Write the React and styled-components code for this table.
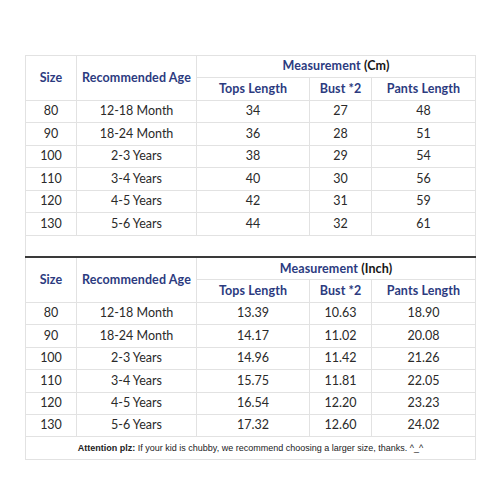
import React from 'react';
import styled, { createGlobalStyle } from 'styled-components';

const GlobalStyle = createGlobalStyle`
  html, body {
    margin: 0;
    padding: 0;
    background: #fff;
  }
`;

const Page = styled.div`
  width: 500px;
  height: 500px;
  padding: 55px 0 0 25px;
  box-sizing: border-box;
  background: #fff;
`;

const Table = styled.table`
  border-collapse: collapse;
  table-layout: fixed;
  width: 450px;
  font-family: Lato, "Open Sans", sans-serif;
  color: #2a2a2a;
  border: 1px solid #e2e2e2;
`;

const Row = styled.tr`
  height: 22.45px;
`;

const Cell = styled.td`
  border: 1px solid #e2e2e2;
  text-align: center;
  vertical-align: middle;
  padding: 0;
  font-size: 12.5px;
  line-height: 1;
  ${(p) => p.$sep && 'border-top: 2px solid #3a3a3a;'}
`;

const Head = styled(Cell).attrs({ as: 'th' })`
  color: #2c3b7f;
  font-weight: 700;
  font-size: 12.5px;
  letter-spacing: 0.1px;
`;

const Unit = styled.span`
  color: #151515;
`;

const Spacer = styled.td`
  border-left: 1px solid #e2e2e2;
  border-right: 1px solid #e2e2e2;
  border-top: 1px solid #e2e2e2;
  padding: 0;
`;

const Note = styled.td`
  border: 1px solid #e2e2e2;
  text-align: center;
  font-family: "Liberation Sans", Arial, sans-serif;
  font-size: 9px;
  color: #222;
  padding: 0;
  b {
    font-weight: 700;
  }
`;

const cm = [
  ['80', '12-18 Month', '34', '27', '48'],
  ['90', '18-24 Month', '36', '28', '51'],
  ['100', '2-3 Years', '38', '29', '54'],
  ['110', '3-4 Years', '40', '30', '56'],
  ['120', '4-5 Years', '42', '31', '59'],
  ['130', '5-6 Years', '44', '32', '61'],
];

const inch = [
  ['80', '12-18 Month', '13.39', '10.63', '18.90'],
  ['90', '18-24 Month', '14.17', '11.02', '20.08'],
  ['100', '2-3 Years', '14.96', '11.42', '21.26'],
  ['110', '3-4 Years', '15.75', '11.81', '22.05'],
  ['120', '4-5 Years', '16.54', '12.20', '23.23'],
  ['130', '5-6 Years', '17.32', '12.60', '24.02'],
];

const Header = ({ unit, sep }) => (
  <>
    <Row>
      <Head rowSpan={2} $sep={sep}>Size</Head>
      <Head rowSpan={2} $sep={sep}>Recommended Age</Head>
      <Head colSpan={3} $sep={sep}>
        Measurement <Unit>({unit})</Unit>
      </Head>
    </Row>
    <Row>
      <Head>Tops Length</Head>
      <Head>Bust *2</Head>
      <Head>Pants Length</Head>
    </Row>
  </>
);

const Body = ({ rows }) =>
  rows.map((r) => (
    <Row key={r[0]}>
      {r.map((v, i) => (
        <Cell key={i}>{v}</Cell>
      ))}
    </Row>
  ));

export default function App() {
  return (
    <Page>
      <GlobalStyle />
      <Table>
        <colgroup>
          <col style={{ width: 51 }} />
          <col style={{ width: 120 }} />
          <col style={{ width: 113 }} />
          <col style={{ width: 62 }} />
          <col style={{ width: 104 }} />
        </colgroup>
        <tbody>
          <Header unit="Cm" />
          <Body rows={cm} />
          <Row>
            <Spacer colSpan={5} />
          </Row>
          <Header unit="Inch" sep />
          <Body rows={inch} />
          <Row>
            <Note colSpan={5}>
              <b>Attention plz:</b> If your kid is chubby, we recommend choosing a larger size, thanks. ^_^
            </Note>
          </Row>
        </tbody>
      </Table>
    </Page>
  );
}
